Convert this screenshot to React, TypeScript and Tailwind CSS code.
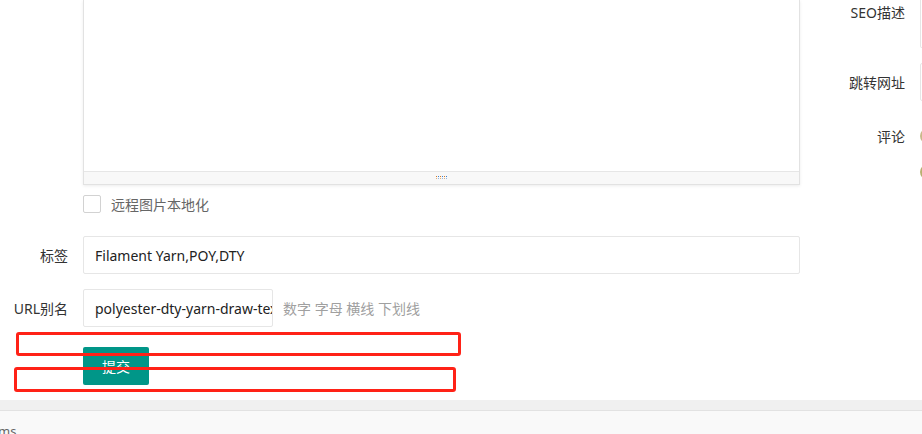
import React from "react";

const cn = "font-['Noto_Sans','Noto_Sans_CJK_SC',sans-serif]";

function Grip() {
  return (
    <svg width="12" height="4" viewBox="0 0 12 4">
      {[0, 2, 4, 6, 8, 10].map((x, i) => (
        <g key={x}>
          <rect x={x} y={0} width={1} height={1} fill={i % 2 ? "#3b82d6" : "#d97a1f"} />
          <rect x={x} y={2} width={1} height={1} fill={i % 2 ? "#8fb9e8" : "#e6ad78"} />
        </g>
      ))}
    </svg>
  );
}

export default function App() {
  return (
    <div className={`relative w-[922px] h-[434px] overflow-hidden bg-white ${cn}`}>
      <div className="flex h-[400px]">
        {/* left form column */}
        <div className="w-[800px] shrink-0 flex flex-col">
          <div className="ml-[83px] w-[717px] border-x border-b border-[#e2e2e2] shadow-[0_1px_3px_rgba(0,0,0,0.08)]">
            <div className="h-[171px] bg-white" />
            <div className="h-[13px] border-t border-[#e6e6e6] bg-[#f8f8f8] flex items-center justify-center">
              <Grip />
            </div>
          </div>

          <div className="mt-[10px] ml-[83px] flex items-center h-[18px]">
            <div className="w-[18px] h-[18px] border border-[#d2d2d2] rounded-[2px] bg-white" />
            <span className="ml-[10px] text-[14px] text-[#666]">远程图片本地化</span>
          </div>

          <div className="mt-[23px] flex items-center">
            <label className="w-[83px] pr-[15px] text-right text-[14px] text-[#333]">标签</label>
            <input
              readOnly
              value="Filament Yarn,POY,DTY"
              className="w-[717px] h-[38px] border border-[#e6e6e6] rounded-[2px] px-[11px] text-[14px] text-[#222] outline-none"
            />
          </div>

          <div className="mt-[15px] flex items-center">
            <label className="w-[83px] pr-[15px] text-right text-[14px] text-[#333] whitespace-nowrap">URL别名</label>
            <input
              readOnly
              value="polyester-dty-yarn-draw-textured-yarn"
              className="w-[190px] h-[38px] border border-[#e6e6e6] rounded-[2px] pl-[11px] pr-0 text-[14px] text-[#222] outline-none"
            />
            <span className="ml-[10px] text-[14px] text-[#a0a0a0] whitespace-nowrap">数字 字母 横线 下划线</span>
          </div>

          <div className="mt-[20px] ml-[83px]">
            <button className="w-[66px] h-[38px] bg-[#009688] rounded-[2px] text-white text-[14px]">提交</button>
          </div>
        </div>

        {/* right column */}
        <div className="flex-1 flex flex-col">
          <div className="flex h-[48px]">
            <label className="w-[120px] shrink-0 pr-[15px] text-right text-[14px] text-[#333] leading-[26px] whitespace-nowrap">SEO描述</label>
            <div className="w-[60px] shrink-0 border border-[#e6e6e6] border-t-0 rounded-bl-[2px]" />
          </div>
          <div className="flex h-[38px] mt-[15px] items-center">
            <label className="w-[120px] shrink-0 pr-[15px] text-right text-[14px] text-[#333] whitespace-nowrap">跳转网址</label>
            <div className="w-[60px] shrink-0 h-[38px] border border-[#e6e6e6] rounded-[2px]" />
          </div>
          <div className="flex mt-[24px] items-center h-[22px]">
            <label className="w-[120px] shrink-0 pr-[15px] text-right text-[14px] text-[#333]">评论</label>
            <div className="w-[16px] h-[16px] rounded-full border-2 border-[#c9b98a] shrink-0" />
          </div>
          <div className="flex mt-[14px] items-center h-[22px]">
            <div className="w-[120px] shrink-0" />
            <div className="w-[16px] h-[16px] rounded-full border-2 border-[#b8b070] shrink-0" />
          </div>
        </div>
      </div>

      <div className="h-[10px] bg-[#f0f0f0]" />
      <div className="h-[24px] border-t border-[#e2e2e2] bg-[#f9f9f9] pt-[13px]">
        <span className="block ml-[-2px] text-[13px] text-[#666] leading-[14px]">ms</span>
      </div>

      {/* annotation boxes */}
      <div className="absolute left-[16px] top-[332px] w-[445px] h-[24px] border-[3px] border-[#ff2217] rounded-[3px]" />
      <div className="absolute left-[14px] top-[367px] w-[442px] h-[25px] border-[3px] border-[#ff2217] rounded-[3px]" />
    </div>
  );
}
